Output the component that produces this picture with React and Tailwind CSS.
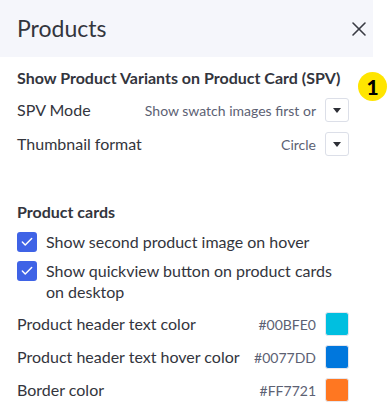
import { X, Check } from 'lucide-react'

const colors = [
  { label: 'Product header text color', hex: '#00BFE0', swatch: 'bg-[#00BFE0]' },
  { label: 'Product header text hover color', hex: '#0077DD', swatch: 'bg-[#0077DD]' },
  { label: 'Border color', hex: '#FF7721', swatch: 'bg-[#FF7721]' },
]

function Caret() {
  return (
    <div className="w-6 h-6 rounded-[3px] border border-[#dcdfe8] bg-white flex items-center justify-center">
      <svg width="8" height="5" viewBox="0 0 8 5">
        <path d="M0 0h8L4 5z" fill="#2d2f36" />
      </svg>
    </div>
  )
}

function CheckBox() {
  return (
    <div className="w-5 h-5 shrink-0 rounded-[3px] bg-[#3f63e6] flex items-center justify-center">
      <Check className="w-3.5 h-3.5 text-white" strokeWidth={2.5} />
    </div>
  )
}

export default function App() {
  return (
    <div className="relative w-[387px] h-[420px] overflow-hidden bg-white text-[#33353d]" style={{ fontFamily: 'Lato, "Open Sans", sans-serif' }}>
      <div className="w-[373px]">
        {/* Header */}
        <header className="h-[57px] bg-[#f5f6fb] flex items-center justify-between pl-[17px] pr-[2px]">
          <h1 className="text-[23px] text-[#33353d]">Products</h1>
          <X className="w-6 h-6 text-[#3a3c44]" strokeWidth={1.6} />
        </header>

        <div className="pl-[17px] pr-[24px] pt-[11px]">
          {/* SPV */}
          <h2 className="text-[16px] leading-5 font-bold text-[#33353d]">Show Product Variants on Product Card (SPV)</h2>
          <div className="mt-[10px] flex flex-col gap-[10px]">
            <div className="flex items-center justify-between h-6">
              <span className="text-[16px]">SPV Mode</span>
              <div className="flex items-center gap-[9px]">
                <span className="text-[14px] text-[#5c6173]">Show swatch images first or</span>
                <Caret />
              </div>
            </div>
            <div className="flex items-center justify-between h-6">
              <span className="text-[16px]">Thumbnail format</span>
              <div className="flex items-center gap-[9px]">
                <span className="text-[14px] text-[#5c6173]">Circle</span>
                <Caret />
              </div>
            </div>
          </div>

          {/* Product cards */}
          <h2 className="mt-[46px] text-[16px] leading-5 font-bold">Product cards</h2>
          <div className="mt-[10px] flex flex-col gap-[9px]">
            <label className="flex items-start gap-[9px]">
              <CheckBox />
              <span className="text-[16px] leading-5">Show second product image on hover</span>
            </label>
            <label className="flex items-start gap-[9px]">
              <CheckBox />
              <span className="text-[16px] leading-[21px] -mt-px">Show quickview button on product cards<br />on desktop</span>
            </label>
          </div>

          <div className="mt-[10px] flex flex-col gap-[9px]">
            {colors.map((c) => (
              <div key={c.hex} className="flex items-center justify-between h-6">
                <span className="text-[16px]">{c.label}</span>
                <div className="flex items-center gap-[9px]">
                  <span className="text-[14px] text-[#5c6173]">{c.hex}</span>
                  <div className={`w-6 h-6 rounded-[3px] border border-[#e4e6ee] ${c.swatch}`} />
                </div>
              </div>
            ))}
          </div>
        </div>
      </div>

      {/* Step badge */}
      <div className="absolute left-[358px] top-[72px] w-[29px] h-[29px] rounded-full bg-[#ffe500] flex items-center justify-center text-[21px] font-black text-black">
        1
      </div>
    </div>
  )
}
